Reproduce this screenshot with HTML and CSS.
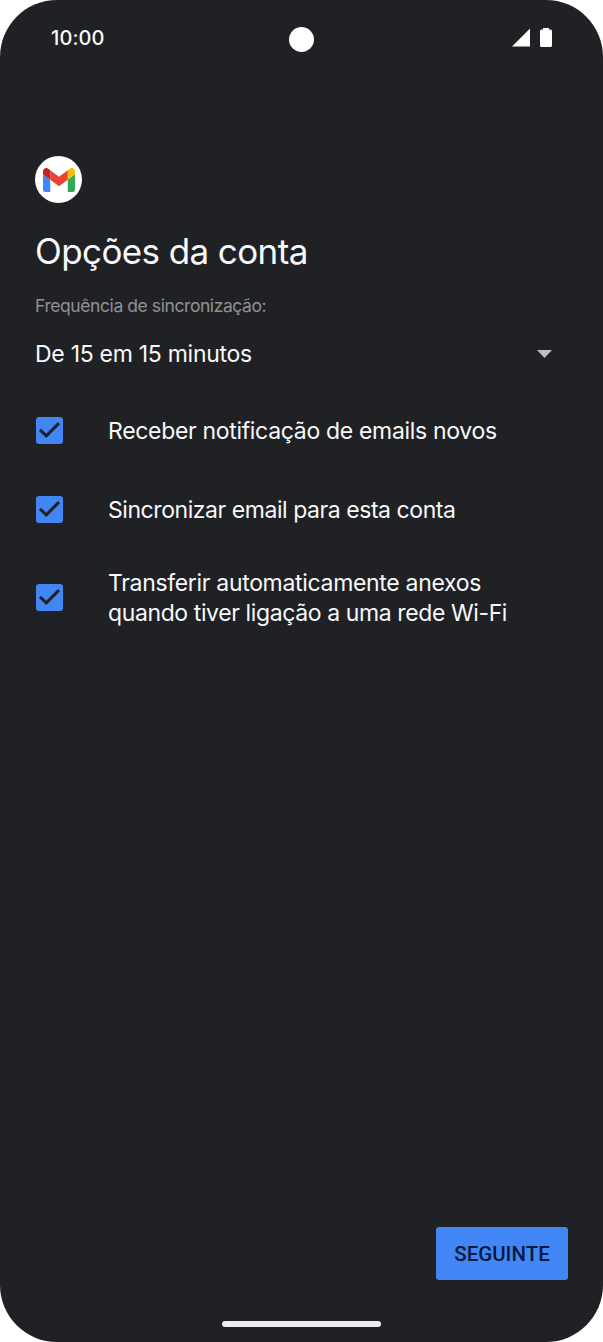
FILE: index.html
```html
<!DOCTYPE html>
<html lang="pt">
<head>
    <meta charset="UTF-8">
    <meta name="viewport" content="width=device-width, initial-scale=1.0">
    <title>Opções da conta</title>
    <link rel="stylesheet" href="styles.css">
</head>
<body>
    <div class="phone">
        <header class="status-bar">
            <span class="time">10:00</span>
            <span class="camera"></span>
            <div class="status-icons">
                <svg class="signal" viewBox="0 0 19 19"><path d="M19 0v19H0z"/></svg>
                <svg class="battery" viewBox="0 0 12 19"><path d="M3 0h6v1.500h1.500A1.500 1.500 0 0 1 12 3v14.500a1.500 1.500 0 0 1-1.500 1.500h-9A1.500 1.500 0 0 1 0 17.500V3A1.500 1.500 0 0 1 1.500 1.500H3z"/></svg>
            </div>
        </header>

        <main class="content">
            <div class="app-icon">
                <svg viewBox="52 42 88 66">
                    <path fill="#4285f4" d="M58 108h14V74L52 59v43c0 3.320 2.690 6 6 6"/>
                    <path fill="#34a853" d="M120 108h14c3.320 0 6-2.690 6-6V59l-20 15"/>
                    <path fill="#fbbc04" d="M120 48v26l20-15v-8c0-7.420-8.470-11.650-14.400-7.200"/>
                    <path fill="#ea4335" d="M72 74V48l24 18 24-18v26L96 92"/>
                    <path fill="#c5221f" d="M52 51v8l20 15V48l-5.600-4.200c-5.940-4.450-14.400-.22-14.400 7.200"/>
                </svg>
            </div>

            <h1 class="title">Opções da conta</h1>
            <p class="label">Frequência de sincronização:</p>

            <div class="select">
                <span>De 15 em 15 minutos</span>
                <svg class="arrow" viewBox="0 0 15 8"><path d="M0 0h15L7.500 8z"/></svg>
            </div>

            <ul class="options">
                <li class="option">
                    <span class="checkbox"><svg viewBox="0 0 27 27"><path d="M4 12.800l6.300 6L23 6.100"/></svg></span>
                    <span class="text-receive">Receber notificação de emails novos</span>
                </li>
                <li class="option">
                    <span class="checkbox"><svg viewBox="0 0 27 27"><path d="M4 12.800l6.300 6L23 6.100"/></svg></span>
                    <span class="text-sync">Sincronizar email para esta conta</span>
                </li>
                <li class="option">
                    <span class="checkbox"><svg viewBox="0 0 27 27"><path d="M4 12.800l6.300 6L23 6.100"/></svg></span>
                    <span><span class="text-transfer">Transferir automaticamente anexos</span><br><span class="text-wifi">quando tiver ligação a uma rede Wi-Fi</span></span>
                </li>
            </ul>
        </main>

        <footer class="actions">
            <button class="next">SEGUINTE</button>
        </footer>

        <nav class="nav-bar"><span class="handle"></span></nav>
    </div>
</body>
</html>
```
FILE: styles.css
```css
* {
    box-sizing: border-box;
}

body {
    margin: 0;
    background: #ffffff;
    font-family: 'Inter', sans-serif;
    color: #f8f9fa;
}

.phone {
    display: flex;
    flex-direction: column;
    height: 1342px;
    background: #202124;
    border-radius: 57px;
    overflow: hidden;
}

.status-bar {
    display: grid;
    grid-template-columns: 1fr 25px 1fr;
    align-items: center;
    height: 76px;
    padding: 0 51px;
}

.time {
    font-size: 20px;
    font-weight: 500;
    letter-spacing: 0.1px;
}

.camera {
    width: 25px;
    height: 25px;
    margin-top: 2px;
    border-radius: 50%;
    background: #ffffff;
}

.status-icons {
    display: flex;
    justify-content: flex-end;
    gap: 10px;
    padding-bottom: 1px;
    fill: #ffffff;
}

.signal {
    width: 18px;
    height: 19px;
}

.battery {
    width: 12px;
    height: 19px;
}

.content {
    flex: 1;
    padding: 80px 35px 0;
}

.app-icon {
    display: flex;
    align-items: center;
    justify-content: center;
    width: 47px;
    height: 47px;
    border-radius: 50%;
    background: #ffffff;
}

.app-icon svg {
    width: 32px;
    height: 24px;
}

.title {
    margin: 24px 0 0;
    font-size: 35px;
    font-weight: 400;
    line-height: 48px;
    letter-spacing: -0.6px;
}

.label {
    margin: 19px 0 0;
    font-size: 17.500px;
    line-height: 24px;
    letter-spacing: -0.42px;
    color: #8f9196;
}

.select {
    display: flex;
    align-items: center;
    justify-content: space-between;
    height: 72px;
    padding-right: 16px;
    font-size: 23px;
    letter-spacing: -0.28px;
}

.arrow {
    width: 15px;
    height: 8px;
    fill: #bdc1c6;
}

.options {
    margin: 1px 0 0;
    padding: 0;
    list-style: none;
    font-size: 23px;
    line-height: 30px;
}

.option {
    display: flex;
    align-items: center;
    gap: 45px;
    min-height: 79.300px;
    padding: 18px 0 18px 1px;
    white-space: nowrap;
}

.text-receive,
.text-transfer {
    letter-spacing: -0.32px;
}

.text-sync {
    letter-spacing: -0.44px;
}

.text-wifi {
    letter-spacing: -0.39px;
}

.checkbox {
    width: 27px;
    height: 27px;
    border-radius: 3px;
    background: #4285f4;
}

.checkbox svg {
    display: block;
    fill: none;
    stroke: #202124;
    stroke-width: 3;
}

.actions {
    display: flex;
    justify-content: flex-end;
    padding: 0 35px 27px;
}

.next {
    width: 132px;
    height: 53px;
    padding: 1px 0 0;
    border: none;
    border-radius: 3px;
    background: #4285f4;
    color: #081a3d;
    font-family: 'Roboto', sans-serif;
    font-size: 20.500px;
    font-weight: 500;
}

.nav-bar {
    display: flex;
    justify-content: center;
    height: 35px;
    padding-top: 13px;
    border-top: 1px solid #1b1c1f;
}

.handle {
    width: 159px;
    height: 6px;
    border-radius: 3px;
    background: #ececec;
}
```
